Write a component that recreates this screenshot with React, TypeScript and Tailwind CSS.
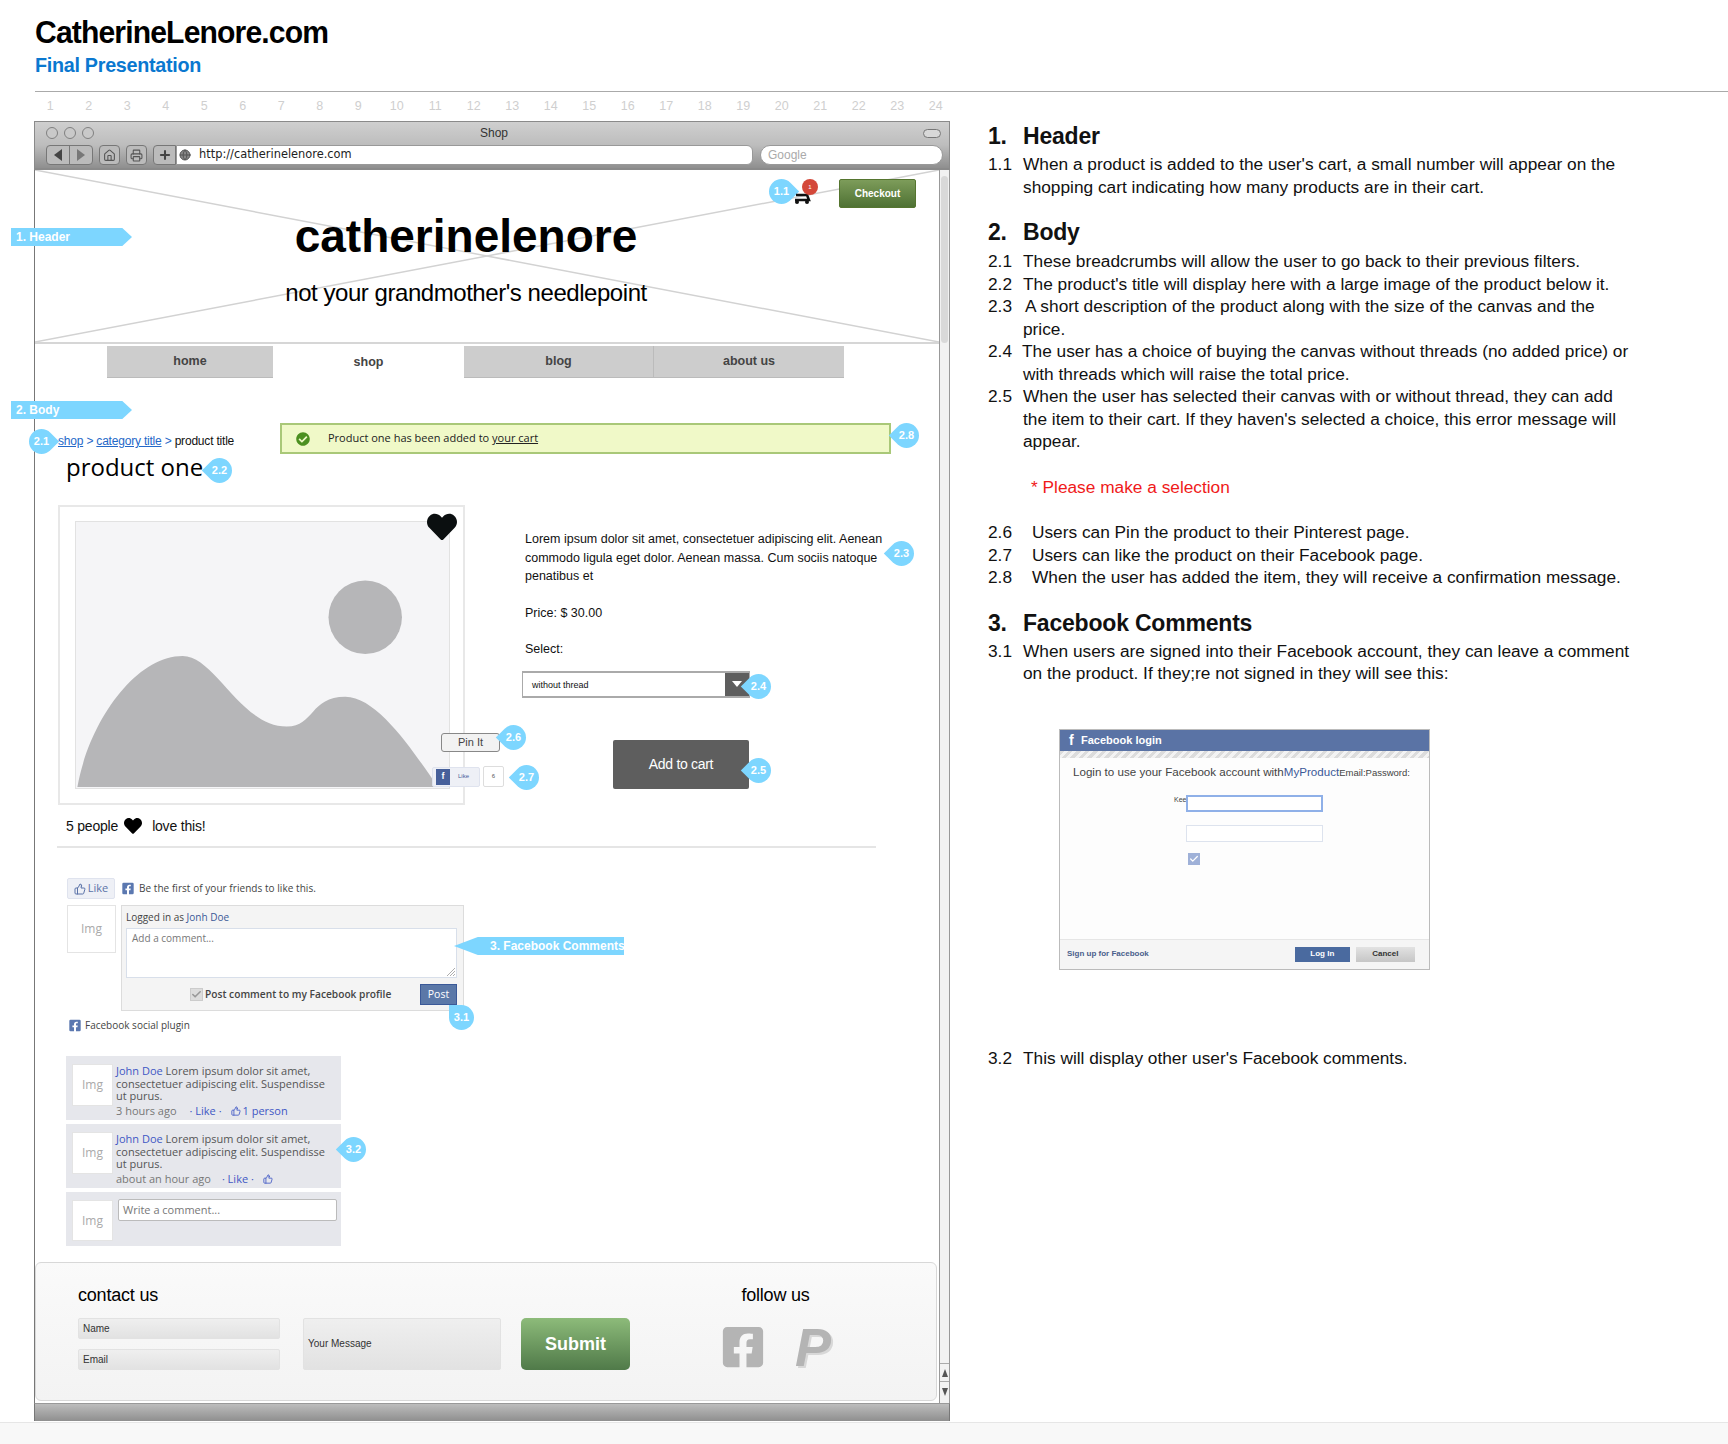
import React from 'react';
import { House, Printer, Plus, Globe, ThumbsUp, Check } from 'lucide-react';
import { FaFacebookSquare, FaCheckCircle, FaHeart } from 'react-icons/fa';

const rulerNumbers = Array.from({ length: 24 }, (_, i) => i + 1);

const Badge: React.FC<{ label: string; className: string; shape: string }> = ({ label, className, shape }) => (
  <div className={`absolute w-[25px] h-[25px] flex items-center justify-center ${className}`}>
    <div className={`absolute inset-0 bg-[#7dd6ff] rounded-full ${shape}`} />
    <span className="relative text-white text-[11px] font-bold">{label}</span>
  </div>
);

const Tag: React.FC<{ label: string; className: string }> = ({ label, className }) => (
  <div className={`absolute h-[18px] bg-[#7dd6ff] text-white text-[12px] font-bold flex items-center whitespace-nowrap ${className}`}>
    {label}
  </div>
);

const ImgBox: React.FC<{ className: string }> = ({ className }) => (
  <div className={`bg-white border border-[#e4e4e4] flex items-center justify-center text-[#aaa] text-[12px] shrink-0 ${className}`}>
    Img
  </div>
);

const NoteRow: React.FC<{ n: string; children: React.ReactNode; textClass?: string }> = ({ n, children, textClass = 'ml-[35px]' }) => (
  <div className="relative text-[17.3px] leading-[22.5px] text-[#111] whitespace-nowrap">
    <span className="absolute left-0 top-0">{n}</span>
    <div className={textClass}>{children}</div>
  </div>
);

const NoteHeading: React.FC<{ n: string; title: string; className: string }> = ({ n, title, className }) => (
  <div className={`flex text-[23px] leading-[28px] font-bold text-[#111] tracking-[-0.2px] ${className}`}>
    <span className="w-[35px]">{n}</span>
    <span>{title}</span>
  </div>
);

const BrowserChrome = () => (
  <div className="h-[49px] shrink-0 border border-[#8a8a8a] border-b-[2px] bg-gradient-to-b from-[#cfcfcf] via-[#bdbdbd] to-[#8f8f8f] flex flex-col">
    <div className="relative h-[22px] flex items-center pl-[11px] gap-[6px]">
      <span className="w-[12px] h-[12px] rounded-full bg-[#c9c9c9] border border-[#808080]" />
      <span className="w-[12px] h-[12px] rounded-full bg-[#c9c9c9] border border-[#808080]" />
      <span className="w-[12px] h-[12px] rounded-full bg-[#c9c9c9] border border-[#808080]" />
      <span className="flex-1 text-center text-[12px] text-[#333] pr-[29px]">Shop</span>
      <span className="w-[18px] h-[9px] mr-[8px] rounded-full bg-[#d8d8d8] border border-[#777]" />
    </div>
    <div className="flex items-center h-[20px] mt-[1px] pl-[11px] gap-[6px]">
      <div className="flex w-[47px] h-[20px] rounded-[4px] border border-[#777] bg-[#bbb]">
        <div className="flex-1 flex items-center justify-center border-r border-[#777]">
          <span className="w-0 h-0 border-y-[6px] border-y-transparent border-r-[8px] border-r-[#444]" />
        </div>
        <div className="flex-1 flex items-center justify-center">
          <span className="w-0 h-0 border-y-[6px] border-y-transparent border-l-[8px] border-l-[#777]" />
        </div>
      </div>
      <div className="w-[21px] h-[20px] rounded-[4px] border border-[#777] bg-[#bbb] flex items-center justify-center">
        <House className="w-[13px] h-[13px] text-[#555]" />
      </div>
      <div className="w-[21px] h-[20px] rounded-[4px] border border-[#777] bg-[#bbb] flex items-center justify-center">
        <Printer className="w-[13px] h-[13px] text-[#555]" />
      </div>
      <div className="flex w-[600px] h-[20px]">
        <div className="w-[23px] rounded-l-[4px] border border-[#777] bg-[#bbb] flex items-center justify-center">
          <Plus className="w-[14px] h-[14px] text-[#444]" strokeWidth={3.5} />
        </div>
        <div className="flex-1 bg-white rounded-r-[6px] border border-[#999] flex items-center">
          <Globe className="w-[12px] h-[12px] text-[#555] ml-[2px] fill-[#888]" />
          <span className="ml-[8px] font-['DejaVu_Sans',sans-serif] text-[11.4px] text-[#222]">http://catherinelenore.com</span>
        </div>
      </div>
      <div className="w-[183px] h-[20px] ml-[1px] rounded-full bg-white border border-[#999] flex items-center pl-[7px] text-[12px] text-[#aaa]">
        Google
      </div>
    </div>
  </div>
);

const SiteHeader = () => (
  <div className="relative h-[174px] shrink-0 border-b-2 border-[#d6d6d6] overflow-hidden">
    <svg className="absolute inset-0 w-full h-full" viewBox="0 0 905 174" preserveAspectRatio="none">
      <line x1="0" y1="0" x2="905" y2="174" stroke="#d2d2d2" strokeWidth="1.5" />
      <line x1="0" y1="174" x2="905" y2="0" stroke="#d2d2d2" strokeWidth="1.5" />
    </svg>
    <div className="relative flex flex-col">
      <div className="flex justify-end pt-[9px] pr-[23px]">
        <div className="w-[77px] h-[29px] rounded-[2px] border border-[#55752f] bg-gradient-to-b from-[#7d9c5a] to-[#4f7234] text-white text-[10px] font-bold flex items-center justify-center">
          Checkout
        </div>
      </div>
      <div className="w-[862px] mt-[5px] flex flex-col items-center">
        <div className="text-[46px] leading-[46px] font-bold text-black">catherinelenore</div>
        <div className="mt-[20px] text-[24px] leading-[28px] text-black tracking-[-0.45px]">not your grandmother's needlepoint</div>
      </div>
    </div>
  </div>
);

const SiteNav = () => (
  <div className="mt-[2px] ml-[72px] flex h-[32px] shrink-0 text-[12.5px] font-bold text-[#444]">
    <div className="w-[166px] bg-[#cdcdcd] border-b border-[#bbb] flex items-center justify-center">home</div>
    <div className="w-[191px] flex items-center justify-center">shop</div>
    <div className="w-[190px] bg-[#cdcdcd] border-b border-r border-[#bbb] flex items-center justify-center">blog</div>
    <div className="w-[190px] bg-[#cdcdcd] border-b border-[#bbb] flex items-center justify-center">about us</div>
  </div>
);

const ProductImage = () => (
  <div className="w-[407px] h-[300px] border-2 border-[#e8e8e8] pl-[15px] pr-[13px] pt-[14px] shrink-0">
    <div className="relative w-[375px] h-[268px] bg-[#f5f5f7] border border-[#e2e2e2]">
      <svg className="w-full h-full" viewBox="0 0 375 268">
        <circle cx="291" cy="96" r="37" fill="#b6b6b8" />
        <path d="M1 267 C 13 200, 60 135, 107 135 C 140 135, 165 206, 212 206 C 240 206, 235 176, 271 176 C 305 176, 343 237, 363 265 L 363 267 Z" fill="#b6b6b8" />
      </svg>
      <FaHeart className="absolute right-[-8px] top-[-10px] w-[30px] h-[30px] text-[#0b0f10]" />
      <div className="absolute left-[365px] top-[211px] w-[59px] h-[19px] bg-[#f2f2f2] border border-[#888] rounded-[3px] text-[11px] text-[#444] flex items-center justify-center">
        Pin It
      </div>
      <div className="absolute left-[356px] top-[244px] flex items-center gap-[3px]">
        <div className="w-[48px] h-[20px] bg-[#eef0f6] border border-[#dfe3ee] rounded-[2px] flex items-center">
          <span className="w-[14px] h-[16px] ml-[3px] bg-[#47609a] text-white text-[9px] font-bold flex items-center justify-center">f</span>
          <span className="ml-[8px] text-[6px] text-[#47609a]">Like</span>
        </div>
        <div className="w-[21px] h-[21px] bg-white border border-[#ddd] rounded-[2px] text-[6px] text-[#555] flex items-center justify-center">6</div>
      </div>
    </div>
  </div>
);

const ProductInfo = () => (
  <div className="ml-[60px] w-[358px] pt-[25px] text-[12.5px] text-[#111]">
    <p className="leading-[18.5px] whitespace-nowrap">
      Lorem ipsum dolor sit amet, consectetuer adipiscing elit. Aenean<br />
      commodo ligula eget dolor. Aenean massa. Cum sociis natoque<br />
      penatibus et
    </p>
    <p className="mt-[18px] leading-[18px]">Price: $ 30.00</p>
    <p className="mt-[18px] leading-[18px]">Select:</p>
    <div className="mt-[13px] ml-[-3px] w-[228px] h-[27px] flex border border-[#aaa] border-y-2 bg-white">
      <span className="flex-1 pl-[9px] text-[9px] leading-[24px]">without thread</span>
      <span className="w-[24px] bg-[#5e5e5e] flex items-center justify-center">
        <span className="w-0 h-0 border-x-[5px] border-x-transparent border-t-[6px] border-t-white" />
      </span>
    </div>
    <div className="mt-[42px] ml-[88px] w-[136px] h-[49px] bg-[#5e5e5e] rounded-[2px] text-white text-[14px] tracking-[-0.3px] flex items-center justify-center">
      Add to cart
    </div>
  </div>
);

const CommentForm = () => (
  <div className="pl-[32px] mt-[30px] font-['Open_Sans',sans-serif] text-[10px] text-[#444]">
    <div className="flex items-center h-[21px]">
      <div className="w-[48px] h-[21px] bg-[#eef0f6] border border-[#dfe3ee] rounded-[2px] flex items-center justify-center gap-[2px] text-[#5b73a8] text-[11px]">
        <ThumbsUp className="w-[12px] h-[12px]" />
        Like
      </div>
      <FaFacebookSquare className="ml-[7px] w-[12px] h-[13px] text-[#5b78b0]" />
      <span className="ml-[5px] tracking-[0.05px]">Be the first of your friends to like this.</span>
    </div>
    <div className="mt-[6px] flex items-start">
      <ImgBox className="w-[49px] h-[48px]" />
      <div className="ml-[5px] w-[343px] h-[106px] bg-[#f4f4f4] border border-[#dcdcdc] px-[4px] flex flex-col">
        <div className="h-[22px] leading-[22px]">Logged in as <span className="text-[#3b5998]">Jonh Doe</span></div>
        <div className="relative h-[50px] w-[331px] bg-white border border-[#d8dfea] pl-[5px] pt-[2px] text-[#777]">
          Add a comment...
          <svg className="absolute right-[1px] bottom-[1px] w-[8px] h-[8px]" viewBox="0 0 8 8">
            <path d="M0 8 L8 0 M3 8 L8 3 M6 8 L8 6" stroke="#999" strokeWidth="0.8" />
          </svg>
        </div>
        <div className="mt-[6px] flex items-center h-[21px] w-[331px]">
          <span className="ml-[64px] w-[13px] h-[13px] bg-[#ddd] border border-[#ccc] flex items-center justify-center">
            <Check className="w-[11px] h-[11px] text-[#999]" strokeWidth={3.5} />
          </span>
          <span className="ml-[2px] font-semibold text-[10.2px]">Post comment to my Facebook profile</span>
          <span className="ml-auto w-[37px] h-[21px] bg-[#5b78a8] border border-[#3b5998] text-white text-[10.5px] flex items-center justify-center">Post</span>
        </div>
      </div>
    </div>
    <div className="mt-[7px] flex items-center h-[14px] pl-[2px]">
      <FaFacebookSquare className="w-[12px] h-[13px] text-[#5b78b0]" />
      <span className="ml-[4px]">Facebook social plugin</span>
    </div>
  </div>
);

const FeedItem: React.FC<{ time: string; children: React.ReactNode; className: string }> = ({ time, children, className }) => (
  <div className={`h-[64px] bg-[#e6e7ec] flex pl-[6px] pt-[8px] ${className}`}>
    <ImgBox className="w-[41px] h-[42px]" />
    <div className="ml-[3px] mt-[1px] text-[11px] leading-[12.6px] text-[#555] whitespace-nowrap">
      <span className="text-[#3f57c4]">John Doe</span> Lorem ipsum dolor sit amet,<br />
      consectetuer adipiscing elit. Suspendisse<br />
      ut purus.<br />
      <span className="flex items-center mt-[2px] text-[#777]">{time}{children}</span>
    </div>
  </div>
);

const CommentFeed = () => (
  <div className="mt-[24px] ml-[31px] w-[275px] font-['Open_Sans',sans-serif]">
    <FeedItem time="3 hours ago" className="">
      <span className="ml-[13px] text-[#3f57c4] flex items-center">· Like ·
        <ThumbsUp className="ml-[9px] w-[10px] h-[10px]" /><span className="ml-[2px]">1 person</span>
      </span>
    </FeedItem>
    <FeedItem time="about an hour ago" className="mt-[4px]">
      <span className="ml-[11px] text-[#3f57c4] flex items-center">· Like ·
        <ThumbsUp className="ml-[9px] w-[10px] h-[10px]" />
      </span>
    </FeedItem>
    <div className="mt-[4px] h-[54px] bg-[#e6e7ec] flex pl-[6px] pt-[8px]">
      <ImgBox className="w-[41px] h-[41px]" />
      <div className="ml-[5px] mt-[-1px] w-[219px] h-[22px] bg-white border border-[#bbb] rounded-[2px] pl-[4px] text-[11px] leading-[20px] text-[#777]">
        Write a comment...
      </div>
    </div>
  </div>
);

const SiteFooter = () => (
  <div className="mt-auto h-[139px] shrink-0 mr-[2px] flex border border-[#d8d8d8] rounded-[6px] bg-gradient-to-b from-[#fafafa] to-[#f3f3f3] pl-[42px] pt-[21px] text-black">
    <div>
      <div className="text-[18px] leading-[22px] tracking-[-0.2px]">contact us</div>
      <div className="mt-[12px] flex">
        <div className="flex flex-col gap-[10px]">
          <div className="w-[202px] h-[21px] rounded-[2px] border border-[#e2e2e2] bg-gradient-to-b from-[#efefef] to-[#e2e2e2] pl-[4px] text-[10px] leading-[20px] text-[#333]">Name</div>
          <div className="w-[202px] h-[21px] rounded-[2px] border border-[#e2e2e2] bg-gradient-to-b from-[#efefef] to-[#e2e2e2] pl-[4px] text-[10px] leading-[20px] text-[#333]">Email</div>
        </div>
        <div className="ml-[23px] w-[198px] h-[52px] rounded-[2px] border border-[#e2e2e2] bg-gradient-to-b from-[#efefef] to-[#e2e2e2] pl-[4px] text-[10px] leading-[50px] text-[#333]">Your Message</div>
        <div className="ml-[20px] w-[109px] h-[52px] rounded-[5px] bg-gradient-to-b from-[#8dbb7a] to-[#507a49] text-white text-[18px] font-bold flex items-center justify-center">Submit</div>
      </div>
    </div>
    <div className="ml-[90px] w-[111px]">
      <div className="text-[18px] leading-[22px] tracking-[-0.2px] text-center">follow us</div>
      <div className="mt-[18px] flex items-center">
        <FaFacebookSquare className="w-[46px] h-[46px] text-[#b4b4b4]" />
        <span className="ml-[29px] text-[54px] leading-[44px] font-bold italic text-[#b4b4b4] [text-shadow:2px_2px_0_#d8d8d8]">P</span>
      </div>
    </div>
  </div>
);

const Scrollbar = () => (
  <div className="w-[10px] shrink-0 bg-[#f2f2f2] border-l border-[#999] flex flex-col justify-between">
    <div className="mt-[6px] h-[167px] bg-[#d9d9d9] rounded-full mx-[1px]" />
    <div className="mb-[2px] text-[#555] flex flex-col items-center">
      <div className="h-[19px] w-full border-y border-[#aaa] flex items-center justify-center">
        <span className="w-0 h-0 border-x-[3px] border-x-transparent border-b-[8px] border-b-[#555]" />
      </div>
      <div className="h-[19px] w-full flex items-center justify-center">
        <span className="w-0 h-0 border-x-[3px] border-x-transparent border-t-[8px] border-t-[#555]" />
      </div>
    </div>
  </div>
);

const BrowserWindow = () => (
  <div className="w-[916px] h-[1300px] flex flex-col shrink-0">
    <BrowserChrome />
    <div className="flex-1 flex min-h-0 border-l border-[#777] border-r border-r-[#999]">
      <div className="w-[904px] flex flex-col">
        <SiteHeader />
        <SiteNav />
        <div className="flex pt-[45px]">
          <div className="w-[245px] pl-[23px]">
            <div className="mt-[10px] text-[12px] leading-[16px] tracking-[-0.2px] text-[#111] whitespace-nowrap">
              <span className="text-[#2468c8] underline">shop</span> <span className="text-[#2468c8]">&gt;</span> <span className="text-[#2468c8] underline">category title</span> <span className="text-[#2468c8]">&gt;</span> product title
            </div>
            <div className="mt-[3px] pl-[8px] font-['Open_Sans',sans-serif] text-[24px] leading-[30px] text-black">product one</div>
          </div>
          <div className="w-[611px] h-[31px] bg-[#f0f9c8] border-2 border-[#a9c878] flex items-center">
            <FaCheckCircle className="ml-[14px] w-[14px] h-[14px] text-[#4c9020]" />
            <span className="ml-[18px] font-['Open_Sans',sans-serif] text-[11px] text-[#222]">
              Product one has been added to <span className="underline">your cart</span>
            </span>
          </div>
        </div>
        <div className="mt-[23px] ml-[23px] flex">
          <ProductImage />
          <ProductInfo />
        </div>
        <div className="mt-[9px] ml-[31px] h-[24px] flex items-center text-[14px] tracking-[-0.2px] text-[#111]">
          5 people
          <FaHeart className="ml-[6px] w-[18px] h-[18px] text-black" />
          <span className="ml-[10px]">love this!</span>
        </div>
        <div className="mt-[8px] ml-[22px] w-[819px] h-[2px] bg-[#e5e5e5]" />
        <CommentForm />
        <CommentFeed />
        <SiteFooter />
        <div className="h-[2px] shrink-0" />
      </div>
      <Scrollbar />
    </div>
    <div className="h-[18px] shrink-0 border-l border-r border-[#777] border-t border-t-[#999] bg-gradient-to-b from-[#bdbdbd] to-[#8f8f8f]" />
  </div>
);

const FacebookLogin = () => (
  <div className="ml-[71px] mt-[44px] w-[371px] h-[241px] border border-[#bbb] bg-white flex flex-col">
    <div className="h-[21px] bg-[#5a73a5] flex items-center text-white text-[11px] font-bold">
      <span className="ml-[9px] w-[12px] text-[14px]">f</span>
      <span>Facebook login</span>
    </div>
    <div className="h-[7px] bg-[repeating-linear-gradient(135deg,#dcdcdc_0,#dcdcdc_3px,#f3f3f3_3px,#f3f3f3_6px)]" />
    <div className="flex-1 pl-[13px] pt-[6px] bg-[#fdfdfd]">
      <div className="text-[11.6px] leading-[16px] text-[#444] whitespace-nowrap">
        Login to use your Facebook account with<span className="text-[#3b5998]">MyProduct</span><span className="text-[9.5px]">Email:Password:</span>
      </div>
      <div className="ml-[101px] mt-[14px] flex items-start">
        <span className="w-[12px] text-[7px] text-[#444]">Kee</span>
        <div className="flex flex-col">
          <div className="w-[137px] h-[17px] bg-white border-2 border-[#8fb0e8]" />
          <div className="mt-[13px] w-[137px] h-[17px] bg-white border border-[#dde3ee]" />
          <div className="mt-[11px] ml-[2px] w-[12px] h-[12px] bg-[#9fb1d8] flex items-center justify-center">
            <Check className="w-[10px] h-[10px] text-white" strokeWidth={3} />
          </div>
        </div>
      </div>
    </div>
    <div className="h-[30px] bg-[#f5f5f5] border-t border-[#e6e6e6] flex items-center pl-[7px] text-[8px] font-bold">
      <span className="text-[#4a5f8c]">Sign up for Facebook</span>
      <span className="ml-[146px] w-[55px] h-[15px] bg-[#4a6a9f] text-white flex items-center justify-center">Log In</span>
      <span className="ml-[6px] w-[59px] h-[15px] bg-gradient-to-b from-[#e2e2e2] to-[#c6c6c6] text-[#333] flex items-center justify-center">Cancel</span>
    </div>
  </div>
);

const Notes = () => (
  <div className="ml-[38px] pt-[1px]">
    <NoteHeading n="1." title="Header" className="" />
    <div className="mt-[3px]" />
    <NoteRow n="1.1">
      When a product is added to the user's cart, a small number will appear on the<br />
      shopping cart indicating how many products are in their cart.
    </NoteRow>
    <NoteHeading n="2." title="Body" className="mt-[20px] mb-[4px]" />
    <NoteRow n="2.1">These breadcrumbs will allow the user to go back to their previous filters.</NoteRow>
    <NoteRow n="2.2">The product's title will display here with a large image of the product below it.</NoteRow>
    <NoteRow n="2.3">
      <span className="ml-[2px]">A short description of the product along with the size of the canvas and the</span><br />
      price.
    </NoteRow>
    <NoteRow n="2.4">
      <span className="ml-[-1px]">The user has a choice of buying the canvas without threads (no added price) or</span><br />
      with threads which will raise the total price.
    </NoteRow>
    <NoteRow n="2.5">
      When the user has selected their canvas with or without thread, they can add<br />
      the item to their cart. If they haven's selected a choice, this error message will<br />
      appear.
    </NoteRow>
    <div className="mt-[23px] mb-[23px] ml-[43px] text-[17.3px] leading-[22.5px] text-[#f01a1a]">* Please make a selection</div>
    <NoteRow n="2.6" textClass="ml-[44px]">Users can Pin the product to their Pinterest page.</NoteRow>
    <NoteRow n="2.7" textClass="ml-[44px]">Users can like the product on their Facebook page.</NoteRow>
    <NoteRow n="2.8" textClass="ml-[44px]">When the user has added the item, they will receive a confirmation message.</NoteRow>
    <NoteHeading n="3." title="Facebook Comments" className="mt-[20px] mb-[3px]" />
    <NoteRow n="3.1">
      When users are signed into their Facebook account, they can leave a comment<br />
      on the product. If they;re not signed in they will see this:
    </NoteRow>
    <FacebookLogin />
    <div className="mt-[77px]">
      <NoteRow n="3.2">This will display other user's Facebook comments.</NoteRow>
    </div>
  </div>
);

export default function App() {
  return (
    <div className="relative w-[1728px] h-[1444px] overflow-hidden bg-white flex flex-col font-['Liberation_Sans',Arial,sans-serif]">
      <div className="pl-[35px] pt-[13px]">
        <h1 className="origin-left scale-x-[.94] text-[32px] leading-[38px] font-bold text-black tracking-[-0.9px]">CatherineLenore.com</h1>
        <h2 className="origin-left scale-x-[.94] mt-[1px] text-[21px] leading-[26px] font-bold text-[#0a78d0] tracking-[-0.3px]">Final Presentation</h2>
      </div>
      <div className="mt-[13px] ml-[35px] h-px bg-[#aaa]" />
      <div className="mt-[4px] ml-[31px] w-[924px] h-[20px] grid grid-cols-[repeat(24,1fr)] text-[12.5px] leading-[20px] text-[#cfcfcf] text-center">
        {rulerNumbers.map((n) => (
          <span key={n}>{n}</span>
        ))}
      </div>
      <div className="mt-[5px] ml-[34px] flex">
        <BrowserWindow />
        <Notes />
      </div>
      <div className="mt-auto h-[22px] bg-[#f8f8f8] border-t border-[#e6e6e6]" />

      {/* Wireframe annotations */}
      <Tag label="1. Header" className="left-[11px] top-[228px] w-[121px] pl-[5px] [clip-path:polygon(0_0,92%_0,100%_50%,92%_100%,0_100%)]" />
      <Tag label="2. Body" className="left-[11px] top-[401px] w-[121px] pl-[5px] [clip-path:polygon(0_0,92%_0,100%_50%,92%_100%,0_100%)]" />
      <Tag label="3. Facebook Comments" className="left-[454px] top-[937px] w-[170px] pl-[36px] [clip-path:polygon(0_50%,14%_0,100%_0,100%_100%,14%_100%)]" />
      <Badge label="1.1" className="left-[769px] top-[179px]" shape="rotate-45 rounded-tr-none" />
      <Badge label="2.1" className="left-[29px] top-[429px]" shape="rotate-45 rounded-tr-none" />
      <Badge label="2.2" className="left-[207px] top-[458px]" shape="-rotate-45 rounded-tl-none" />
      <Badge label="2.3" className="left-[889px] top-[541px]" shape="-rotate-45 rounded-tl-none" />
      <Badge label="2.4" className="left-[746px] top-[674px]" shape="-rotate-45 rounded-tl-none" />
      <Badge label="2.5" className="left-[746px] top-[758px]" shape="-rotate-45 rounded-tl-none" />
      <Badge label="2.6" className="left-[501px] top-[725px]" shape="-rotate-45 rounded-tl-none" />
      <Badge label="2.7" className="left-[514px] top-[765px]" shape="-rotate-45 rounded-tl-none" />
      <Badge label="2.8" className="left-[894px] top-[423px]" shape="-rotate-45 rounded-tl-none" />
      <Badge label="3.1" className="left-[449px] top-[1005px]" shape="rounded-tl-none" />
      <Badge label="3.2" className="left-[341px] top-[1137px]" shape="-rotate-45 rounded-tl-none" />

      {/* Cart with its count */}
      <div className="absolute left-[792px] top-[178px] w-[24px] h-[28px]">
        <svg className="w-full h-full" viewBox="0 0 24 28">
          <path d="M4 17 H15 L17 9 M15 17 L17 22 H3" fill="none" stroke="#111" strokeWidth="2.5" />
          <circle cx="5" cy="24" r="2" fill="#111" />
          <circle cx="15" cy="24" r="2" fill="#111" />
        </svg>
        <span className="absolute left-[10px] top-[1px] w-[16px] h-[16px] rounded-full bg-[#d4483a] text-white text-[6px] flex items-center justify-center">1</span>
      </div>
    </div>
  );
}
